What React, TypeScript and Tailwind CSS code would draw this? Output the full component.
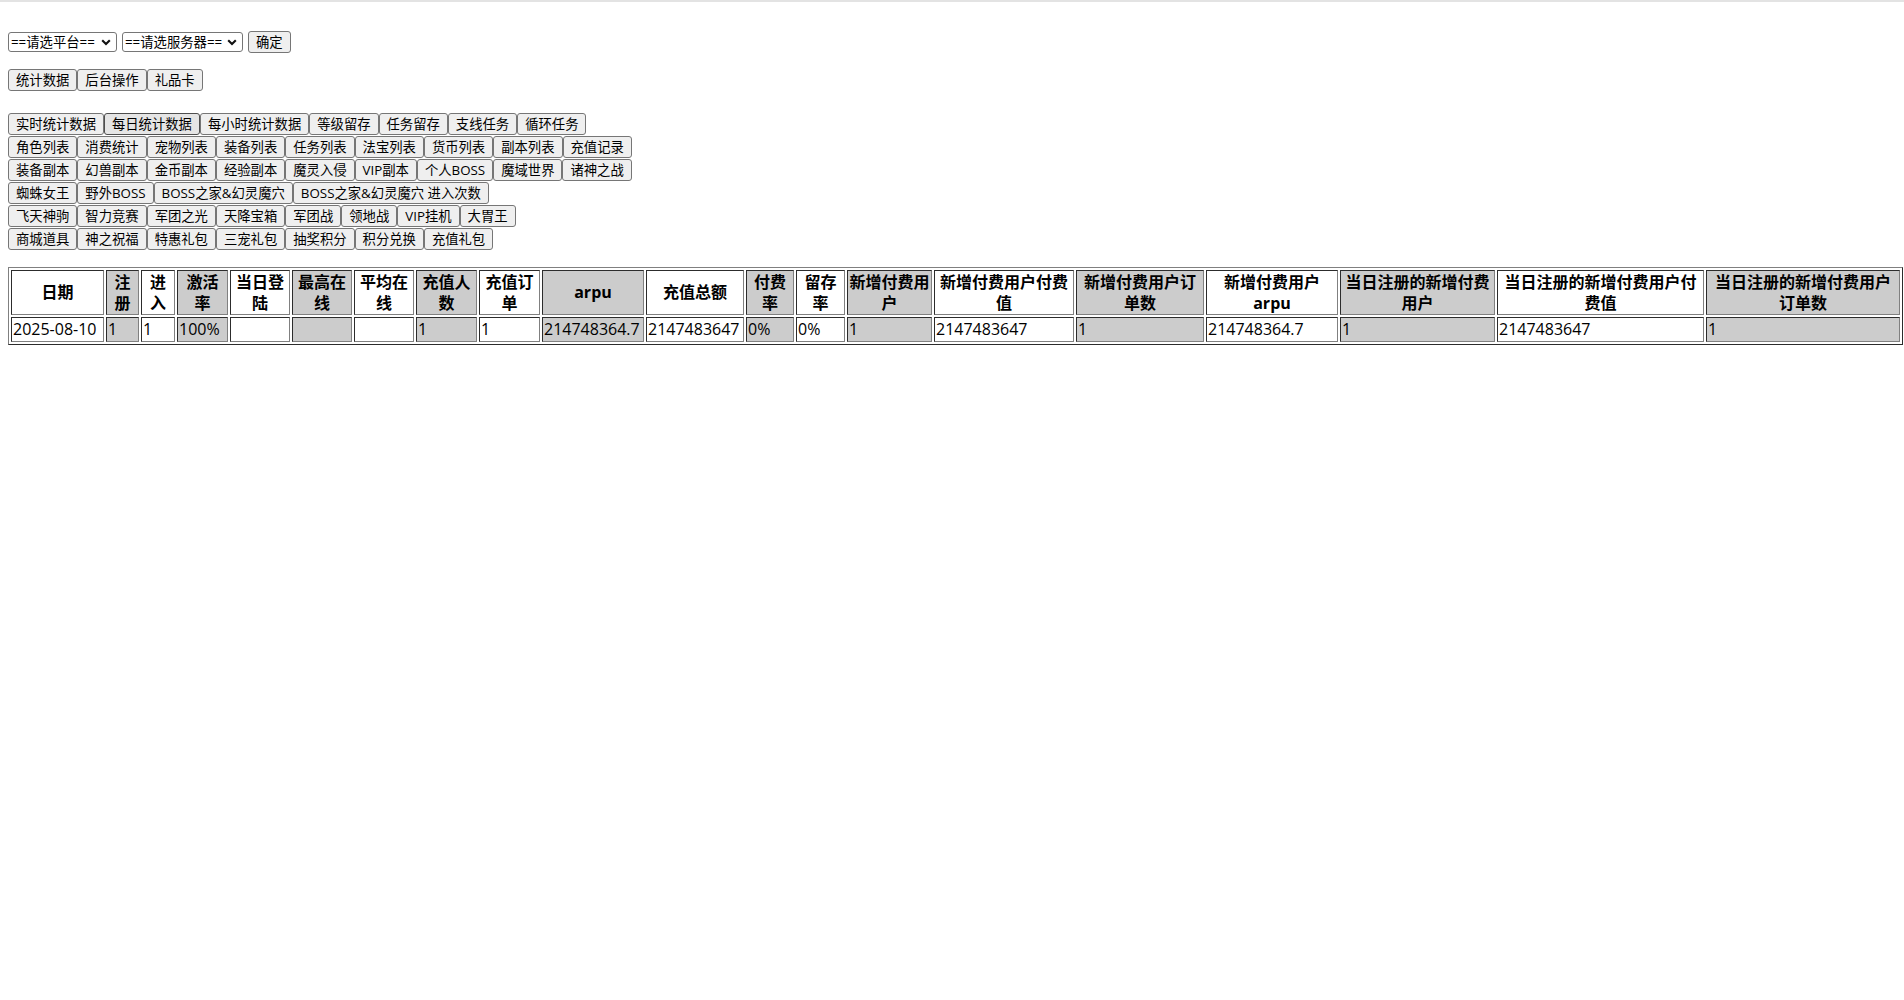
import { useState } from "react";

const FONT = "[font-family:'Open_Sans','Noto_Sans_CJK_SC',sans-serif]";

const ROWS: string[][] = [
  ["实时统计数据", "每日统计数据", "每小时统计数据", "等级留存", "任务留存", "支线任务", "循环任务"],
  ["角色列表", "消费统计", "宠物列表", "装备列表", "任务列表", "法宝列表", "货币列表", "副本列表", "充值记录"],
  ["装备副本", "幻兽副本", "金币副本", "经验副本", "魔灵入侵", "VIP副本", "个人BOSS", "魔域世界", "诸神之战"],
  ["蜘蛛女王", "野外BOSS", "BOSS之家&幻灵魔穴", "BOSS之家&幻灵魔穴 进入次数"],
  ["飞天神驹", "智力竞赛", "军团之光", "天降宝箱", "军团战", "领地战", "VIP挂机", "大胃王"],
  ["商城道具", "神之祝福", "特惠礼包", "三宠礼包", "抽奖积分", "积分兑换", "充值礼包"],
];

/* COLUMNS: header, width, value */

const COLUMNS = [
  { head: "日期", w: "w-[93px]", value: "2025-08-10" },
  { head: "注册", w: "w-[33px]", value: "1" },
  { head: "进入", w: "w-[34px]", value: "1" },
  { head: "激活率", w: "w-[51px]", value: "100%" },
  { head: "当日登陆", w: "w-[60px]", value: "" },
  { head: "最高在线", w: "w-[60px]", value: "" },
  { head: "平均在线", w: "w-[60px]", value: "" },
  { head: "充值人数", w: "w-[61px]", value: "1" },
  { head: "充值订单", w: "w-[61px]", value: "1" },
  { head: "arpu", w: "w-[102px]", value: "214748364.7" },
  { head: "充值总额", w: "w-[98px]", value: "2147483647" },
  { head: "付费率", w: "w-[48px]", value: "0%" },
  { head: "留存率", w: "w-[49px]", value: "0%" },
  { head: "新增付费用户", w: "w-[85px]", value: "1" },
  { head: "新增付费用户付费值", w: "w-[140px]", value: "2147483647" },
  { head: "新增付费用户订单数", w: "w-[128px]", value: "1" },
  { head: "新增付费用户arpu", w: "w-[132px]", value: "214748364.7" },
  { head: "当日注册的新增付费用户", w: "w-[155px]", value: "1" },
  { head: "当日注册的新增付费用户付费值", w: "w-[207px]", value: "2147483647" },
  { head: "当日注册的新增付费用户订单数", w: "w-[194px]", value: "1" },
];

const Btn = ({ label, hover }: { label: string; hover?: boolean }) => (
  <button
    className={`h-[22px] shrink-0 whitespace-nowrap px-[7px] border rounded-[3px] text-[13.333px] leading-[18px] text-black ${
      hover ? "bg-[#e5e5e5] border-[#4f4f4f]" : "bg-[#efefef] border-[#767676]"
    }`}
  >
    {label}
  </button>
);

const Select = ({ label, width }: { label: string; width: string }) => (
  <div className={`relative h-[20px] ${width}`}>
    <select className="block appearance-none w-full h-[20px] bg-white border border-[#767676] rounded-[3px] pl-[2px] py-0 text-[13.333px] leading-[18px] text-black outline-none">
      <option>{label}</option>
    </select>
    <svg
      className="block absolute right-[6px] top-[7px] pointer-events-none"
      width="10"
      height="7"
      viewBox="0 0 10 7"
    >
      <path d="M1.2 1.2 L5 5 L8.8 1.2" fill="none" stroke="#111" strokeWidth="2.1" />
    </svg>
  </div>
);

const App = () => {
  const [active] = useState("每日统计数据");

  return (
    <div className={`min-h-screen bg-white text-black ${FONT}`}>
      {/* TOP LINE */}

      <div className="h-[2px] bg-[#e3e3e3]" />

      <div className="px-[8px]">
        {/* PLATFORM / SERVER */}

        <div className="mt-[29px] flex items-center gap-[5px] h-[22px]">
          <Select label="==请选平台==" width="w-[109px]" />
          <Select label="==请选服务器==" width="w-[121px]" />
          <Btn label="确定" />
        </div>

        {/* MAIN TABS */}

        <div className="mt-[16px] flex">
          <Btn label="统计数据" />
          <Btn label="后台操作" />
          <Btn label="礼品卡" />
        </div>

        {/* REPORT BUTTONS */}

        <div className="mt-[22px] flex flex-col gap-[1px]">
          {ROWS.map((row, i) => (
            <div key={i} className="flex">
              {row.map((label) => (
                <Btn key={label} label={label} hover={label === active} />
              ))}
            </div>
          ))}
        </div>

        {/* TABLE */}

        <table className="mt-[17px] w-[1895px] table-fixed border-separate border-spacing-[2px] border border-[#808080] [border-style:outset] text-[16px] leading-[20.5px]">
          <thead>
            <tr>
              {COLUMNS.map((c, i) => (
                <th
                  key={c.head}
                  className={`${c.w} p-[1px] border border-[#808080] [border-style:inset] font-bold text-center align-middle ${
                    i % 2 === 1 ? "bg-[#cccccc]" : "bg-white"
                  }`}
                >
                  {c.head}
                </th>
              ))}
            </tr>
          </thead>
          <tbody>
            <tr>
              {COLUMNS.map((c, i) => (
                <td
                  key={c.head}
                  className={`p-[1px] h-[25px] border border-[#808080] [border-style:inset] text-left align-middle whitespace-nowrap overflow-hidden ${
                    i % 2 === 1 ? "bg-[#cccccc]" : "bg-white"
                  }`}
                >
                  {c.value}
                </td>
              ))}
            </tr>
          </tbody>
        </table>
      </div>
    </div>
  );
};

export default App;
